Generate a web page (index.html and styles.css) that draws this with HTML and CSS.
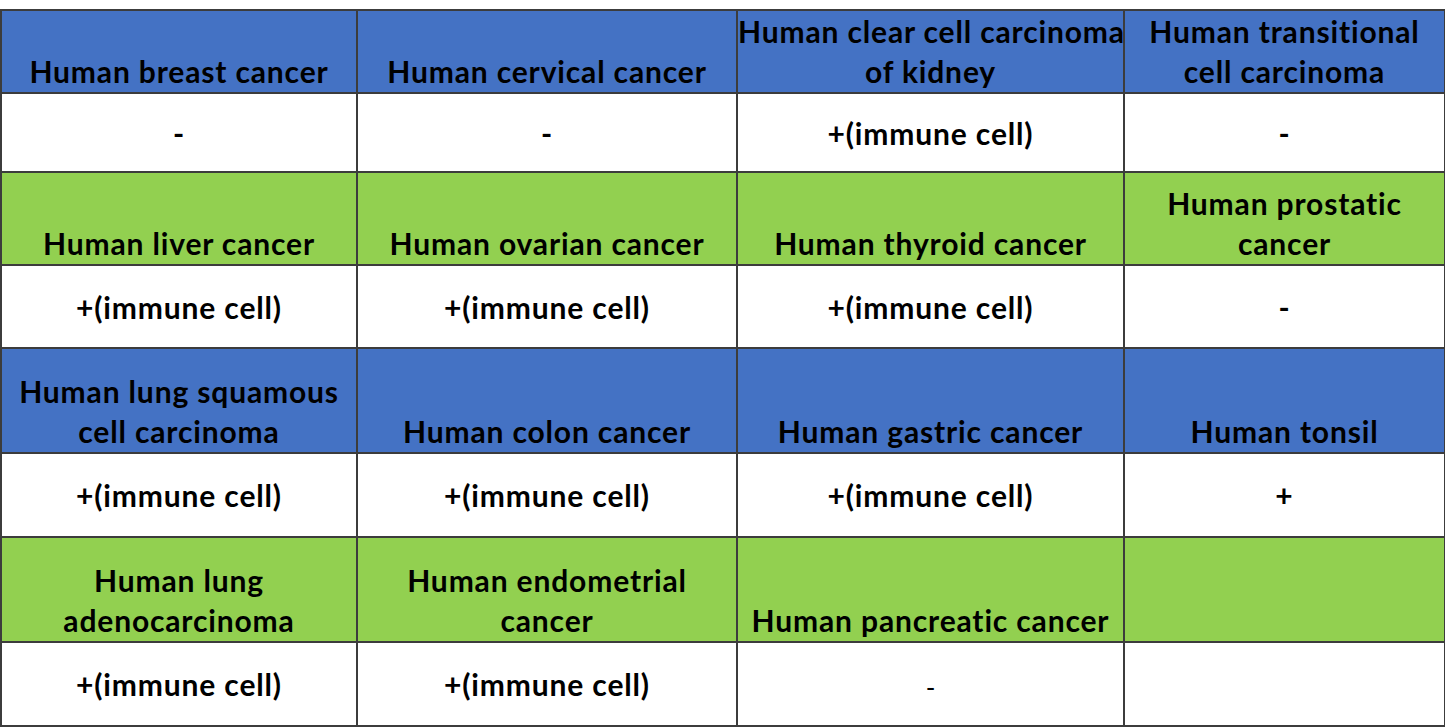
FILE: index.html
```html
<!DOCTYPE html>
<html>
<head>
<meta charset="utf-8">
<link rel="stylesheet" href="styles.css">
</head>
<body>
<table class="grid">
  <colgroup>
    <col class="c1"><col class="c2"><col class="c3"><col class="c4">
  </colgroup>
  <tr class="head blue h1">
    <td>Human breast cancer</td>
    <td>Human cervical cancer</td>
    <td>Human clear cell carcinoma<br>of kidney</td>
    <td>Human transitional<br>cell carcinoma</td>
  </tr>
  <tr class="data d1">
    <td>-</td><td>-</td><td>+(immune cell)</td><td>-</td>
  </tr>
  <tr class="head green h2">
    <td>Human liver cancer</td>
    <td>Human ovarian cancer</td>
    <td>Human thyroid cancer</td>
    <td>Human prostatic<br>cancer</td>
  </tr>
  <tr class="data d2">
    <td>+(immune cell)</td><td>+(immune cell)</td><td>+(immune cell)</td><td>-</td>
  </tr>
  <tr class="head blue h3">
    <td>Human lung squamous<br>cell carcinoma</td>
    <td>Human colon cancer</td>
    <td>Human gastric cancer</td>
    <td>Human tonsil</td>
  </tr>
  <tr class="data d3">
    <td>+(immune cell)</td><td>+(immune cell)</td><td>+(immune cell)</td><td>+</td>
  </tr>
  <tr class="head green h4">
    <td>Human lung<br>adenocarcinoma</td>
    <td>Human endometrial<br>cancer</td>
    <td>Human pancreatic cancer</td>
    <td></td>
  </tr>
  <tr class="data d4">
    <td>+(immune cell)</td><td>+(immune cell)</td><td class="light">-</td><td></td>
  </tr>
</table>
</body>
</html>
```

FILE: styles.css
```css
html, body {
  margin: 0;
  padding: 0;
  background: #ffffff;
}

body {
  padding-top: 9px;
}

.grid {
  border-collapse: collapse;
  table-layout: fixed;
  width: 1444px;
  font-family: Lato, "Liberation Sans", sans-serif;
  font-weight: 700;
  font-size: 30px;
  letter-spacing: 0.85px;
  color: #000000;
}

.c1 { width: 356px; }
.c2 { width: 380px; }
.c3 { width: 387px; }
.c4 { width: 321px; }

.grid td {
  border: 2px solid #3c3c3c;
  text-align: center;
  padding: 0;
  line-height: 40px;
  white-space: nowrap;
  overflow: visible;
}

.head td {
  vertical-align: bottom;
  padding-bottom: 1px;
}

.data td {
  vertical-align: middle;
}

.blue td { background: #4472c4; }
.green td { background: #92d050; }

.h1 { height: 83px; }
.d1 { height: 79px; }
.h2 { height: 93px; }
.d2 { height: 83px; }
.h3 { height: 105px; }
.d3 { height: 84px; }
.h4 { height: 105px; }
.d4 { height: 84px; }

.data td.light {
  font-weight: 400;
  font-size: 26px;
  letter-spacing: 0;
  padding-top: 6px;
}
```
